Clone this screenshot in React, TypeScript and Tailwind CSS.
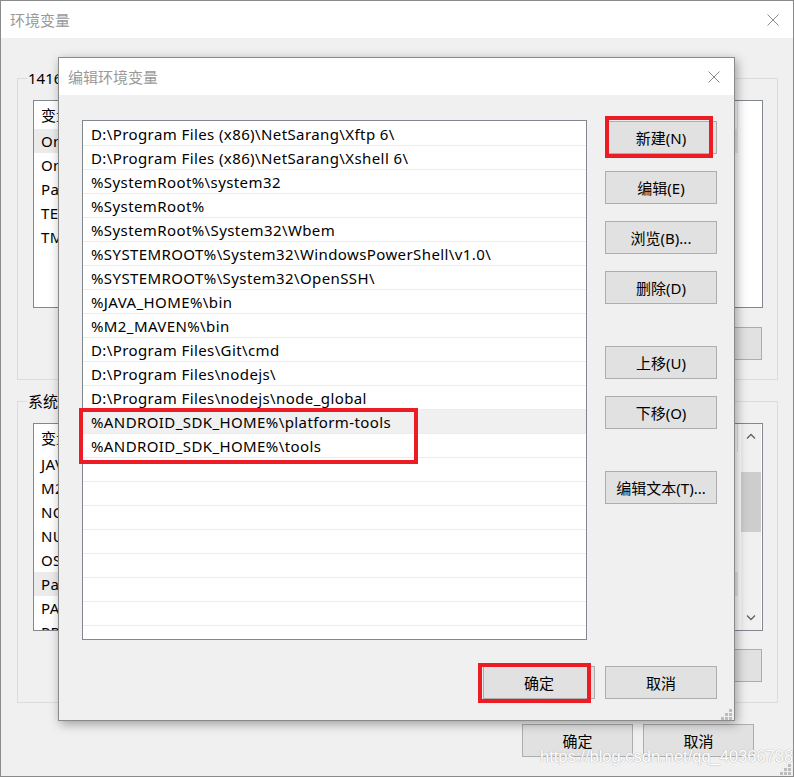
import React from "react";

const dialogPaths = [
  "D:\\Program Files (x86)\\NetSarang\\Xftp 6\\",
  "D:\\Program Files (x86)\\NetSarang\\Xshell 6\\",
  "%SystemRoot%\\system32",
  "%SystemRoot%",
  "%SystemRoot%\\System32\\Wbem",
  "%SYSTEMROOT%\\System32\\WindowsPowerShell\\v1.0\\",
  "%SYSTEMROOT%\\System32\\OpenSSH\\",
  "%JAVA_HOME%\\bin",
  "%M2_MAVEN%\\bin",
  "D:\\Program Files\\Git\\cmd",
  "D:\\Program Files\\nodejs\\",
  "D:\\Program Files\\nodejs\\node_global",
  "%ANDROID_SDK_HOME%\\platform-tools",
  "%ANDROID_SDK_HOME%\\tools",
];

const userVars = ["OneDrive", "OneDriveConsumer", "Path", "TEMP", "TMP"];
const sysVars = [
  "JAVA_HOME",
  "M2_MAVEN",
  "NODE_PATH",
  "NUMBER_OF_PROCESSORS",
  "OS",
  "Path",
  "PATHEXT",
  "PROCESSOR_ARCHITECTURE",
];

function CloseX() {
  return (
    <svg width="12" height="12" viewBox="0 0 12 12">
      <path d="M0.5 0.5L11.5 11.5M11.5 0.5L0.5 11.5" stroke="#8c8c8c" strokeWidth="1" />
    </svg>
  );
}

function Grip() {
  return (
    <svg width="11" height="11" viewBox="0 0 11 11">
      <rect x="8" y="0" width="3" height="3" fill="#bdbdbd" />
      <rect x="4" y="4" width="3" height="3" fill="#bdbdbd" />
      <rect x="8" y="4" width="3" height="3" fill="#bdbdbd" />
      <rect x="0" y="8" width="3" height="3" fill="#bdbdbd" />
      <rect x="4" y="8" width="3" height="3" fill="#bdbdbd" />
      <rect x="8" y="8" width="3" height="3" fill="#bdbdbd" />
    </svg>
  );
}

function Btn({ children, className = "" }: { children: React.ReactNode; className?: string }) {
  return (
    <div
      className={`h-[33px] border border-[#adadad] bg-[#e1e1e1] flex items-center justify-center text-[15px] text-black ${className}`}
    >
      {children}
    </div>
  );
}

function BgList({ rows, sel, scroll }: { rows: string[]; sel: number; scroll?: boolean }) {
  return (
    <div className="h-[208px] border border-[#828790] bg-white overflow-hidden flex">
      <div className="flex-1 overflow-hidden">
        <div className="w-[704px]">
          <div className="h-[28px] flex items-center pl-[7px] border-r border-[#e5e5e5] text-[15px]">
            <span className="w-[300px]">变量</span>
            <span>值</span>
          </div>
          {rows.map((r, i) => (
            <div
              key={i}
              className={`h-[24px] flex items-center pl-[7px] text-[15px] text-black tracking-[0.4px] ${i === sel ? "bg-[#ebebeb]" : ""}`}
            >
              {r}
            </div>
          ))}
        </div>
      </div>
      {scroll && (
        <div className="w-[20px] mr-[1px] bg-[#f0f0f0] flex flex-col">
          <div className="h-[24px] flex items-center justify-center">
            <svg width="10" height="6" viewBox="0 0 10 6">
              <path d="M1 5.5L5 1.5L9 5.5" stroke="#606060" strokeWidth="1.3" fill="none" />
            </svg>
          </div>
          <div className="flex-1">
            <div className="mt-[24px] h-[60px] bg-[#cdcdcd]" />
          </div>
          <div className="h-[24px] flex items-center justify-center">
            <svg width="10" height="6" viewBox="0 0 10 6">
              <path d="M1 0.5L5 4.5L9 0.5" stroke="#606060" strokeWidth="1.3" fill="none" />
            </svg>
          </div>
        </div>
      )}
    </div>
  );
}

export default function App() {
  const emptyRows = Array.from({ length: 10 });
  return (
    <div className="relative w-[794px] h-[777px] overflow-hidden font-['Noto_Sans','Noto_Sans_CJK_SC',sans-serif] text-black leading-[20px]">
      {/* background window */}
      <div className="w-full h-full border border-[#8a8a8a] bg-[#f0f0f0] flex flex-col">
        <div className="h-[37px] shrink-0 bg-white flex items-center justify-between pl-[9px] pr-[14px]">
          <span className="text-[15px] text-[#9a9a9a]">环境变量</span>
          <CloseX />
        </div>
        <div className="pl-[16px] pr-[15px] pt-[40px]">
          <div className="relative border border-[#dcdcdc] pt-[21px] pl-[15px] pr-[14px] pb-[19px]">
            <span className="absolute left-[9px] -top-[11px] bg-[#f0f0f0] px-[1px] text-[15px]">14166的用户变量(U)</span>
            <BgList rows={userVars} sel={0} />
            <div className="flex justify-end gap-[10px] mt-[19px] pr-[1px]">
              <Btn className="w-[111px]">新建(N)...</Btn>
              <Btn className="w-[111px]">编辑(E)...</Btn>
              <Btn className="w-[111px]">删除(D)</Btn>
            </div>
          </div>
          <div className="relative mt-[21px] border border-[#dcdcdc] pt-[21px] pl-[15px] pr-[14px] pb-[20px]">
            <span className="absolute left-[9px] -top-[11px] bg-[#f0f0f0] px-[1px] text-[15px]">系统变量(S)</span>
            <BgList rows={sysVars} sel={5} scroll />
            <div className="flex justify-end gap-[10px] mt-[18px] pr-[1px]">
              <Btn className="w-[111px]">新建(W)...</Btn>
              <Btn className="w-[111px]">编辑(I)...</Btn>
              <Btn className="w-[111px]">删除(L)</Btn>
            </div>
          </div>
        </div>
        <div className="flex justify-end gap-[10px] mt-[21px] pr-[39px]">
          <Btn className="w-[111px]">确定</Btn>
          <Btn className="w-[111px]">取消</Btn>
        </div>
      </div>
      <div className="absolute right-[3px] bottom-[2px]">
        <Grip />
      </div>

      {/* watermark */}
      <div className="absolute left-[540px] top-[746px] font-['Liberation_Sans',sans-serif] text-[16.5px] text-white [text-shadow:0_0_1px_#b0b0b0,0_0_1px_#b0b0b0]">
        https://blog.csdn.net/qq_40366738
      </div>

      {/* edit dialog */}
      <div className="absolute left-[58px] top-[57px] w-[677px] h-[664px] border border-[#8a8a8a] bg-[#f0f0f0] shadow-[2px_3px_10px_rgba(0,0,0,0.35)] flex flex-col">
        <div className="h-[37px] shrink-0 bg-white flex items-center justify-between pl-[9px] pr-[14px]">
          <span className="text-[15px] text-[#9a9a9a]">编辑环境变量</span>
          <CloseX />
        </div>
        <div className="flex pl-[23px] pt-[25px]">
          <div className="w-[505px] h-[520px] border border-[#828790] bg-white pt-[1px] overflow-hidden">
            {dialogPaths.map((p, i) => (
              <div
                key={i}
                className={`h-[24px] border-b border-[#ececec] pl-[8px] flex items-center text-[15px] tracking-[0.4px] text-black whitespace-nowrap ${i === 12 ? "bg-[#f0f0f0]" : ""}`}
              >
                {p}
              </div>
            ))}
            {emptyRows.map((_, i) => (
              <div key={"e" + i} className="h-[24px] border-b border-[#ececec]" />
            ))}
          </div>
          <div className="ml-[18px] mt-[1px] w-[112px] flex flex-col">
            <Btn>新建(N)</Btn>
            <Btn className="mt-[17px]">编辑(E)</Btn>
            <Btn className="mt-[17px]">浏览(B)...</Btn>
            <Btn className="mt-[17px]">删除(D)</Btn>
            <Btn className="mt-[42px]">上移(U)</Btn>
            <Btn className="mt-[17px]">下移(O)</Btn>
            <Btn className="mt-[42px]">编辑文本(T)...</Btn>
          </div>
        </div>
        <div className="flex justify-end gap-[10px] mt-[26px] pr-[17px]">
          <Btn className="w-[112px]">确定</Btn>
          <Btn className="w-[112px]">取消</Btn>
        </div>
        <div className="absolute right-[2px] bottom-[0px]">
          <Grip />
        </div>
      </div>

      {/* red annotation boxes */}
      <div className="absolute left-[605px] top-[116px] w-[108px] h-[42px] border-4 border-[#ed1c24]" />
      <div className="absolute left-[79px] top-[408px] w-[339px] h-[56px] border-4 border-[#ed1c24]" />
      <div className="absolute left-[478px] top-[663px] w-[113px] h-[40px] border-4 border-[#ed1c24]" />
    </div>
  );
}
